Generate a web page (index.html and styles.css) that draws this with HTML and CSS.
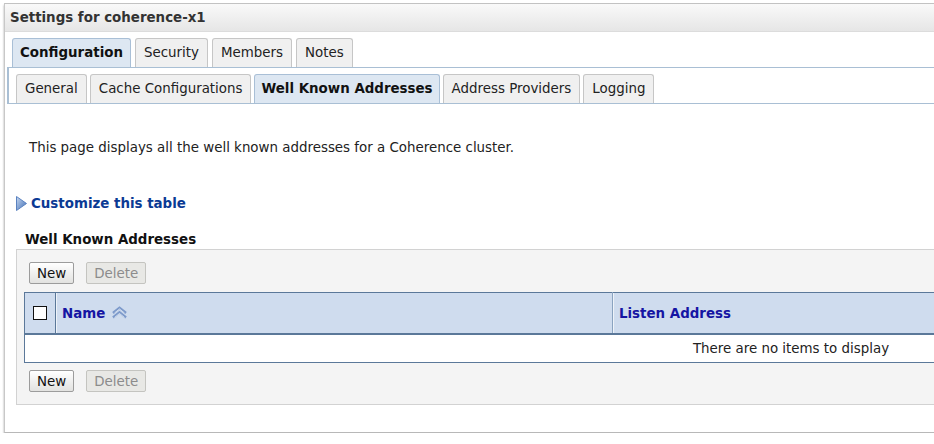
FILE: index.html
```html
<!DOCTYPE html>
<html>
<head>
<meta charset="utf-8">
<link rel="stylesheet" href="styles.css">
</head>
<body>
<div class="panel">
  <div class="panel-header">Settings for coherence-x1</div>
  <div class="tabs main-tabs">
    <div class="tab active">Configuration</div>
    <div class="tab">Security</div>
    <div class="tab">Members</div>
    <div class="tab">Notes</div>
  </div>
  <div class="subtab-bar">
    <div class="tabs sub-tabs">
      <div class="tab">General</div>
      <div class="tab">Cache Configurations</div>
      <div class="tab active">Well Known Addresses</div>
      <div class="tab">Address Providers</div>
      <div class="tab">Logging</div>
    </div>
  </div>
  <div class="content">
    <p class="intro">This page displays all the well known addresses for a Coherence cluster.</p>
    <div class="customize">
      <svg class="tri" width="11" height="15" viewBox="0 0 11 15">
        <defs>
          <linearGradient id="tg" x1="0" y1="0" x2="1" y2="1">
            <stop offset="0" stop-color="#c7d8f0"/>
            <stop offset="1" stop-color="#3f6db5"/>
          </linearGradient>
        </defs>
        <polygon points="0.5,0.5 10.5,7.5 0.5,14.5" fill="url(#tg)" stroke="#5a82c0" stroke-width="1"/>
      </svg>
      <span class="link">Customize this table</span>
    </div>
    <div class="table-title">Well Known Addresses</div>
    <div class="table-box">
      <div class="btn-row">
        <button class="btn">New</button>
        <button class="btn disabled">Delete</button>
      </div>
      <table class="grid">
        <thead>
          <tr>
            <th class="col-check"><span class="checkbox"></span></th>
            <th class="col-name">Name
              <svg class="sort" width="17" height="13" viewBox="0 0 17 13">
                <polyline points="2,7 8.5,1.8 15,7" fill="none" stroke="#7d9acb" stroke-width="2.6" stroke-linejoin="miter"/>
                <polyline points="2,11.5 8.5,6.3 15,11.5" fill="none" stroke="#7d9acb" stroke-width="2.6" stroke-linejoin="miter"/>
                <polyline points="3.5,7 8.5,3 13.5,7" fill="none" stroke="#dbe5f3" stroke-width="0.9"/>
                <polyline points="3.5,11.5 8.5,7.5 13.5,11.5" fill="none" stroke="#dbe5f3" stroke-width="0.9"/>
              </svg>
            </th>
            <th class="col-addr">Listen Address</th>
          </tr>
        </thead>
        <tbody>
          <tr><td colspan="3" class="empty">There are no items to display</td></tr>
        </tbody>
      </table>
      <div class="btn-row bottom">
        <button class="btn">New</button>
        <button class="btn disabled">Delete</button>
      </div>
    </div>
  </div>
</div>
</body>
</html>
```
FILE: styles.css
```css
html, body {
  margin: 0;
  padding: 0;
  background: #ffffff;
  overflow: hidden;
}
body {
  font-family: "DejaVu Sans", Verdana, sans-serif;
  font-size: 13.4px;
  color: #222222;
}
.panel {
  width: 1600px;
  margin: 3px 0 0 4px;
  border-top: 1px solid #c2c2c2;
  border-left: 1px solid #c8c8c8;
  border-bottom: 1px solid #b8b8b8;
  box-shadow: 0 2px 2px rgba(0, 0, 0, 0.35);
  padding-bottom: 27px;
}
.panel-header {
  height: 27px;
  line-height: 27px;
  padding-left: 5px;
  font-weight: bold;
  color: #333333;
  background: linear-gradient(#f9f9f9, #e6e6e6);
  border-bottom: 1px solid #dcdcdc;
}
.tabs {
  display: flex;
  gap: 4px;
}
.main-tabs {
  padding: 6px 0 0 7px;
}
.tab {
  height: 28px;
  line-height: 28px;
  padding: 0 8px;
  border: 1px solid #c6c6c6;
  border-bottom: none;
  border-radius: 3px 3px 0 0;
  background: #f0f0f0;
  color: #222222;
}
.tab.active {
  padding: 0 7px;
  background: #dde7f2;
  border-color: #a9bfd6;
  font-weight: bold;
  color: #111111;
}
.subtab-bar {
  margin-left: 2px;
  border-top: 1px solid #a9bfd4;
  border-bottom: 1px solid #a9bfd4;
  border-left: 2px solid #a9bfd4;
}
.sub-tabs {
  padding: 6px 0 0 7px;
  gap: 3px;
}
.sub-tabs .tab.active {
  padding: 0 6px;
}
.content {
  padding: 36px 0 0 0;
}
.intro {
  margin: 0 0 0 24px;
  line-height: 16px;
}
.customize {
  display: flex;
  align-items: center;
  gap: 4px;
  margin: 39px 0 0 11px;
  height: 16px;
}
.tri {
  display: block;
}
.link {
  font-weight: bold;
  color: #0b3a94;
}
.table-title {
  margin: 21px 0 0 20px;
  line-height: 16px;
  font-weight: bold;
  color: #111111;
}
.table-box {
  margin: 1px 0 0 11px;
  border: 1px solid #d2d2d2;
  background: #f4f4f4;
  padding: 12px 0 12px 7px;
}
.btn-row {
  display: flex;
  gap: 12px;
  padding-left: 5px;
}
.btn-row.bottom {
  margin-top: 7px;
}
.btn {
  font-family: "DejaVu Sans", Verdana, sans-serif;
  font-size: 13.4px;
  height: 22px;
  padding: 0 7px;
  border: 1px solid #9c9c9c;
  border-radius: 2px;
  background: linear-gradient(#ffffff, #e2e2e0);
  color: #111111;
}
.btn.disabled {
  border-color: #c4c4c0;
  background: #e8e8e5;
  color: #8c8c8c;
}
.grid {
  margin-top: 8px;
  width: 1534px;
  border-collapse: collapse;
  border: 1px solid #5b7899;
  background: #ffffff;
}
.grid th {
  height: 40px;
  padding: 0;
  background: #cfdcee;
  border-bottom: 2px solid #5b7899;
  text-align: left;
  font-weight: bold;
  color: #1515a3;
  vertical-align: middle;
}
.col-check {
  width: 30px;
  border-right: 1px solid #5b7899;
  text-align: center !important;
}
.checkbox {
  display: block;
  width: 12px;
  height: 12px;
  margin: 0 auto;
  border: 1px solid #111111;
  background: #ffffff;
}
.col-name {
  width: 550px;
  padding-left: 6px !important;
  border-right: 1px solid #8aa3c0;
  box-shadow: inset 1px 0 0 #eef3f9;
}
.sort {
  vertical-align: -1px;
  margin-left: 1px;
}
.col-addr {
  padding-left: 6px !important;
  box-shadow: inset 1px 0 0 #eef3f9;
}
.empty {
  height: 27px;
  padding: 0;
  text-align: center;
  color: #222222;
}
```
